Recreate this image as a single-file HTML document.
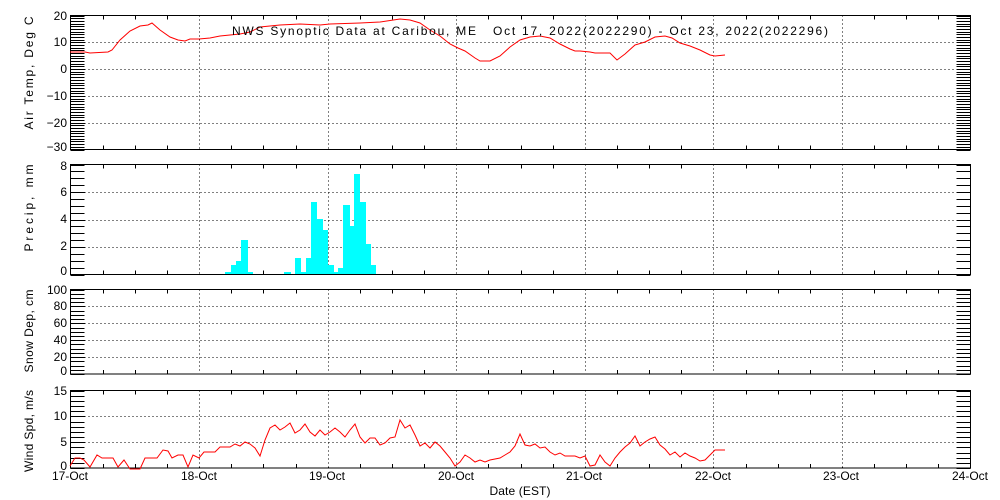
<!DOCTYPE html>
<html><head><meta charset="utf-8"><style>
html,body{margin:0;padding:0;background:#fff;}
svg{display:block;font-family:"Liberation Sans",sans-serif;font-size:12px;}
text{fill:#000;}
</style></head><body>
<svg id="s" width="1000" height="500" xmlns="http://www.w3.org/2000/svg">
<rect width="1000" height="500" fill="#fff"/>
<g id="g"></g>
<g id="bars" fill="#00ffff"></g>
<polyline fill="none" stroke="#f00" stroke-width="1" points="70,52 85,52 90,53 108,52 112,50 120,40 130,31 140,26 148,25 152,23 160,30 170,37 178,40 185,41 190,39 199,39 210,38 220,36 230,35 240,34 250,32 260,27 280,25 300,24 320,25 330,24 360,23 380,22 400,19 410,20 420,23 430,30 440,36 450,44 458,48 465,51 475,58 480,61 490,61 500,56 510,47 520,40 530,37 540,36 550,38 560,44 570,49 575,51 580,51 590,52 595,53 610,53 617,60 625,54 635,45 645,42 655,37 665,36 672,38 680,43 690,46 700,50 710,55 715,56 725,55"/>
<polyline fill="none" stroke="#f00" stroke-width="1" points="70,466 75,458 80,458 84,460 90,467 97,455 102,458 113,458 118,467 124,460 130,469 140,469 145,458 157,458 163,450 168,451 172,458 178,455 183,455 188,467 193,455 199,458 204,452 215,452 220,447 230,447 235,444 240,446 245,442 250,444 255,448 260,456 265,440 270,428 275,425 280,430 285,427 290,423 295,433 300,430 305,424 310,432 315,436 320,430 325,435 330,432 335,428 340,432 345,437 350,430 355,424 360,437 365,443 370,438 375,438 380,445 385,443 390,438 395,437 400,420 405,428 410,425 415,435 420,446 425,443 430,448 435,442 440,446 445,452 450,458 455,466 460,462 465,455 470,458 475,462 480,460 485,462 490,460 500,458 505,455 510,452 515,446 520,434 525,445 530,446 535,444 540,448 545,447 550,452 555,455 560,453 565,456 575,456 580,458 585,456 590,466 595,465 600,455 605,462 610,466 615,458 620,452 625,447 630,443 635,436 640,446 645,442 650,439 655,437 660,445 665,449 670,455 675,452 680,457 685,453 690,456 695,458 700,461 705,460 710,455 715,450 725,450"/>
<text x="232" y="35" xml:space="preserve" style="white-space:pre" textLength="596" lengthAdjust="spacing">NWS Synoptic Data at Caribou, ME   Oct 17, 2022(2022290) - Oct 23, 2022(2022296)</text>
<g text-anchor="end">
<text x="67" y="20">20</text><text x="67" y="46">10</text><text x="67" y="73">0</text><text x="67" y="100">−10</text><text x="67" y="127">−20</text><text x="67" y="151">−30</text>
<text x="67" y="170">8</text><text x="67" y="196">6</text><text x="67" y="223">4</text><text x="67" y="250">2</text><text x="67" y="275">0</text>
<text x="67" y="294">100</text><text x="67" y="310">80</text><text x="67" y="327">60</text><text x="67" y="344">40</text><text x="67" y="361">20</text><text x="67" y="375">0</text>
<text x="67" y="395">15</text><text x="67" y="420">10</text><text x="67" y="446">5</text><text x="67" y="470">0</text>
</g>
<g text-anchor="middle">
<text transform="translate(33,73) rotate(-90)" textLength="113" lengthAdjust="spacing">Air Temp, Deg C</text>
<text transform="translate(33,208) rotate(-90)" textLength="87" lengthAdjust="spacing">Precip, mm</text>
<text transform="translate(33,331) rotate(-90)" textLength="83" lengthAdjust="spacing">Snow Dep, cm</text>
<text transform="translate(33,431) rotate(-90)" textLength="82" lengthAdjust="spacing">Wind Spd, m/s</text>
<text x="70" y="480">17-Oct</text><text x="199" y="480">18-Oct</text><text x="327" y="480">19-Oct</text><text x="456" y="480">20-Oct</text><text x="584" y="480">21-Oct</text><text x="713" y="480">22-Oct</text><text x="841" y="480">23-Oct</text><text x="970" y="480">24-Oct</text>
<text x="520" y="495" textLength="61" lengthAdjust="spacing">Date (EST)</text>
</g>
</svg>
<script>
var NS="http://www.w3.org/2000/svg",g=document.getElementById('g');
function L(x1,y1,x2,y2,dash){var l=document.createElementNS(NS,'line');l.setAttribute('x1',x1);l.setAttribute('y1',y1);l.setAttribute('x2',x2);l.setAttribute('y2',y2);l.setAttribute('stroke','#000');l.setAttribute('stroke-width','1');if(dash)l.setAttribute('stroke-dasharray','1,3');g.appendChild(l);}
var X0=70.5,X1=970.5,dw=(X1-X0)/7;
var P=[[15.5,149.5,-30,20,1,10],[164.5,274.5,0,8,0.5,2],[289.5,374,0,100,5,20],[390.5,468,0,15,1,5]];
P.forEach(function(p){var t=p[0],b=p[1],mn=p[2],mx=p[3],st=p[4],lb=p[5];
 var n=Math.round((mx-mn)/st);
 for(var i=0;i<=n;i++){var v=mn+i*st,y=Math.round(b-(v-mn)/(mx-mn)*(b-t))+0.5;
  L(X0,y,X0+14,y);L(X1-14,y,X1,y);
  if(i>0&&i<n&&Math.abs(v/lb-Math.round(v/lb))<1e-6){L(X0+14,y,X1-14,y,true);}}
 for(var k=1;k<28;k++){var x=Math.round(X0+k*dw/4)+0.5;
  if(k%4==0){L(x,t,x,b,true);}else{L(x,t,x,t+4);L(x,b-4,x,b);}}
 var r=document.createElementNS(NS,'rect');r.setAttribute('x',X0);r.setAttribute('y',t);r.setAttribute('width',X1-X0);r.setAttribute('height',b-t);r.setAttribute('fill','none');r.setAttribute('stroke','#000');g.appendChild(r);
});
var bars=[[225,231,272],[231,236,265],[236,241,261],[241,248,240],[248,253,272],[284,291,272],[295,301,258],[301,306,272],[306,311,258],[311,317,202],[317,323,219],[323,328,230],[328,334,265],[334,338,272],[338,343,268],[343,350,205],[350,354,226],[354,360,174],[360,366,202],[366,371,244],[371,376,265]];
var bg=document.getElementById('bars');
bars.forEach(function(a){var r=document.createElementNS(NS,'rect');r.setAttribute('x',a[0]);r.setAttribute('y',a[2]);r.setAttribute('width',a[1]-a[0]);r.setAttribute('height',274-a[2]);bg.appendChild(r);});
</script>
</body></html>
